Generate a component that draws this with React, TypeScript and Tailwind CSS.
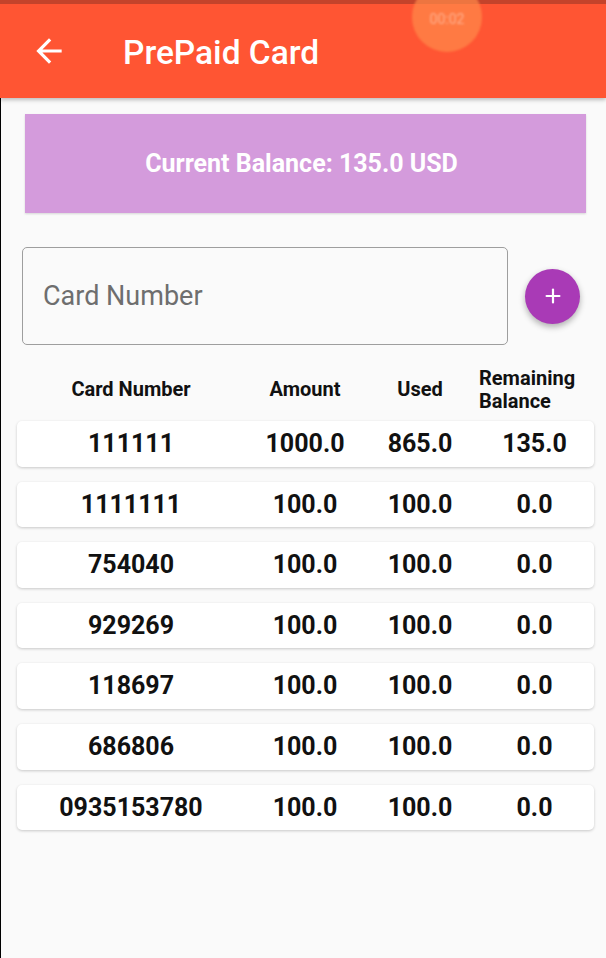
import { Plus } from 'lucide-react'

type CardRow = {
  number: string
  amount: string
  used: string
  remaining: string
}

const ROWS: CardRow[] = [
  { number: '111111', amount: '1000.0', used: '865.0', remaining: '135.0' },
  { number: '1111111', amount: '100.0', used: '100.0', remaining: '0.0' },
  { number: '754040', amount: '100.0', used: '100.0', remaining: '0.0' },
  { number: '929269', amount: '100.0', used: '100.0', remaining: '0.0' },
  { number: '118697', amount: '100.0', used: '100.0', remaining: '0.0' },
  { number: '686806', amount: '100.0', used: '100.0', remaining: '0.0' },
  { number: '0935153780', amount: '100.0', used: '100.0', remaining: '0.0' },
]

const COLS = 'grid grid-cols-[228px_120px_110px_119px] items-center'

function AppBar() {
  return (
    <header className="relative z-10 shadow-[0_2px_4px_rgba(0,0,0,0.25)]">
      <div className="h-[4px] bg-[#c4432b]" />
      <div className="flex h-[94px] items-center bg-[#ff5533] pl-[30px]">
        <svg viewBox="0 0 24 24" className="h-[38px] w-[38px] text-white" aria-hidden="true">
          <path
            d="M20 11H7.83l5.59-5.59L12 4l-8 8 8 8 1.41-1.41L7.83 13H20v-2z"
            fill="currentColor"
          />
        </svg>
        <h1 className="mt-[3px] ml-[55px] text-[33.5px] font-medium leading-none text-white">PrePaid Card</h1>
      </div>
      {/* screen recorder timer overlay */}
      <div className="absolute top-[-18px] left-[412px] flex h-[70px] w-[70px] items-center justify-center rounded-full bg-[#ff8a4a]/70 blur-[1px]">
        <span className="pt-[5px] text-[14px] text-white/40">00:02</span>
      </div>
    </header>
  )
}

export default function App() {
  return (
    <div className="min-h-[958px] bg-[#fafafa] font-['Roboto','Liberation_Sans',sans-serif]">
      <AppBar />
      <main className="flex min-h-[860px] flex-col border-l border-black pt-[16px] pr-[12px] pl-[16px]">
        <div className="mx-[8px] flex h-[99px] items-center justify-center bg-[#d49bdc] shadow-[0_1px_2px_rgba(0,0,0,0.15)]">
          <p className="pr-[8px] text-[25px] font-bold text-white">Current Balance: 135.0 USD</p>
        </div>

        <div className="mt-[34px] flex items-center">
          <div className="ml-[5px] flex h-[98px] w-[486px] items-center rounded-[5px] border-[1.5px] border-[#9e9e9e] px-[20px]">
            <span className="text-[27px] text-[#6e6e6e]">Card Number</span>
          </div>
          <button
            type="button"
            className="ml-[17px] flex h-[55px] w-[55px] items-center justify-center rounded-full bg-[#a93ab6] text-white shadow-[0_3px_6px_rgba(0,0,0,0.3)]"
          >
            <Plus size={22} strokeWidth={2.4} />
          </button>
        </div>

        <div className={`${COLS} mt-[21px] h-[47px] text-[20px] font-bold leading-[23px] text-[#111]`}>
          <span className="text-center">Card Number</span>
          <span className="text-center">Amount</span>
          <span className="text-center">Used</span>
          <span className="pl-[4px]">
            Remaining
            <br />
            Balance
          </span>
        </div>

        <div className="mt-[8px] flex flex-col gap-[15px]">
          {ROWS.map((row) => (
            <div
              key={row.number}
              className={`${COLS} h-[45.6px] rounded-[5px] bg-white text-[25px] font-bold text-[#111] shadow-[0_1px_3px_rgba(0,0,0,0.2)]`}
            >
              <span className="text-center">{row.number}</span>
              <span className="text-center">{row.amount}</span>
              <span className="text-center">{row.used}</span>
              <span className="text-center">{row.remaining}</span>
            </div>
          ))}
        </div>
      </main>
    </div>
  )
}
